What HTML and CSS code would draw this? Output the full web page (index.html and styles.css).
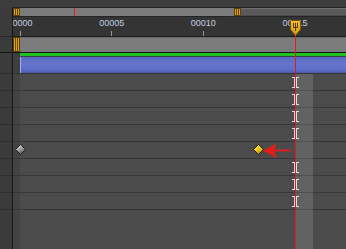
FILE: index.html
```html
<!DOCTYPE html>
<html>
<head>
<meta charset="utf-8">
<link rel="stylesheet" href="styles.css">
</head>
<body>
<div class="app">
  <div class="top"></div>

  <div class="band nav">
    <div class="lc"></div><div class="vl"></div>
    <div class="tl">
      <div class="handle"></div>
      <div class="navbar"><span class="navmark"></span></div>
      <div class="handle"></div>
      <div class="navrest"></div>
    </div>
  </div>

  <div class="band ruler">
    <div class="lc"></div><div class="vl"></div>
    <div class="tl">
      <span class="lbl" style="left:7px">00000</span>
      <span class="lbl" style="left:98.7px">00005</span>
      <span class="lbl" style="left:190.3px">00010</span>
      <span class="lbl" style="left:282px">00015</span>
      <span class="tick" style="left:7px"></span>
      <span class="tick" style="left:98px"></span>
      <span class="tick" style="left:190px"></span>
      <span class="tick" style="left:282px"></span>
    </div>
  </div>

  <div class="band work">
    <div class="lc"></div><div class="vl"></div>
    <div class="tl">
      <div class="handle"></div>
      <div class="workbar"></div>
    </div>
  </div>

  <div class="band greenband">
    <div class="lc"></div><div class="vl"></div>
    <div class="tl">
      <div class="strip"></div>
      <div class="green"></div>
    </div>
  </div>

  <div class="band blueband">
    <div class="lc"></div><div class="vl"></div>
    <div class="tl">
      <div class="strip"></div>
      <div class="blue"></div>
    </div>
  </div>

  <div class="band row"><div class="lc"></div><div class="vl"></div><div class="tl"><div class="strip"></div><svg class="ibeam" width="7" height="11" viewBox="0 0 7 11"><rect x="0" y="0" width="7" height="1"/><rect x="2" y="0" width="3" height="11"/><rect x="0" y="10" width="7" height="1"/></svg></div></div>
  <div class="band row"><div class="lc"></div><div class="vl"></div><div class="tl"><div class="strip"></div><svg class="ibeam" width="7" height="11" viewBox="0 0 7 11"><rect x="0" y="0" width="7" height="1"/><rect x="2" y="0" width="3" height="11"/><rect x="0" y="10" width="7" height="1"/></svg></div></div>
  <div class="band row"><div class="lc"></div><div class="vl"></div><div class="tl"><div class="strip"></div><svg class="ibeam" width="7" height="11" viewBox="0 0 7 11"><rect x="0" y="0" width="7" height="1"/><rect x="2" y="0" width="3" height="11"/><rect x="0" y="10" width="7" height="1"/></svg></div></div>
  <div class="band row"><div class="lc"></div><div class="vl"></div><div class="tl"><div class="strip"></div><svg class="ibeam" width="7" height="11" viewBox="0 0 7 11"><rect x="0" y="0" width="7" height="1"/><rect x="2" y="0" width="3" height="11"/><rect x="0" y="10" width="7" height="1"/></svg></div></div>
  <div class="band row"><div class="lc"></div><div class="vl"></div><div class="tl"><div class="strip"></div>
    <svg class="kf kf-grey" width="11" height="11" viewBox="0 0 11 11">
      <defs><linearGradient id="gg" x1="0" y1="0" x2="0.6" y2="1"><stop offset="0" stop-color="#f2f2f2"/><stop offset="0.5" stop-color="#a8a8a8"/><stop offset="1" stop-color="#555"/></linearGradient></defs>
      <polygon points="5.5,0.5 10.5,5.5 5.5,10.5 0.5,5.5" fill="url(#gg)" stroke="#1e1e1e" stroke-width="1"/>
    </svg>
    <svg class="kf kf-yellow" width="11" height="11" viewBox="0 0 11 11">
      <defs><linearGradient id="yg" x1="0" y1="0" x2="0.6" y2="1"><stop offset="0" stop-color="#fff59a"/><stop offset="0.5" stop-color="#f2d21e"/><stop offset="1" stop-color="#b88a00"/></linearGradient></defs>
      <polygon points="5.5,0.5 10.5,5.5 5.5,10.5 0.5,5.5" fill="url(#yg)" stroke="#2a2000" stroke-width="1"/>
    </svg>
    <svg class="arrow" width="30" height="17" viewBox="0 0 30 17">
      <polygon points="1,8.7 14.5,1.3 12.5,7.6 29,7.4 29,9.2 12.5,9.6 14.5,16" fill="#e41b1b"/>
    </svg>
  </div></div>
  <div class="band row"><div class="lc"></div><div class="vl"></div><div class="tl"><div class="strip"></div><svg class="ibeam" width="7" height="11" viewBox="0 0 7 11"><rect x="0" y="0" width="7" height="1"/><rect x="2" y="0" width="3" height="11"/><rect x="0" y="10" width="7" height="1"/></svg></div></div>
  <div class="band row"><div class="lc"></div><div class="vl"></div><div class="tl"><div class="strip"></div><svg class="ibeam" width="7" height="11" viewBox="0 0 7 11"><rect x="0" y="0" width="7" height="1"/><rect x="2" y="0" width="3" height="11"/><rect x="0" y="10" width="7" height="1"/></svg></div></div>
  <div class="band row"><div class="lc"></div><div class="vl"></div><div class="tl"><div class="strip"></div><svg class="ibeam" width="7" height="11" viewBox="0 0 7 11"><rect x="0" y="0" width="7" height="1"/><rect x="2" y="0" width="3" height="11"/><rect x="0" y="10" width="7" height="1"/></svg></div></div>

  <div class="band rest">
    <div class="lc"></div><div class="vl"></div>
    <div class="tl"><div class="strip"></div></div>
  </div>

  <div class="lightband"></div>
  <div class="cti-line"></div>
  <svg class="cti-head" width="11" height="16" viewBox="0 0 11 16">
    <defs><linearGradient id="cg" x1="0" y1="0" x2="0" y2="1"><stop offset="0" stop-color="#f4bf2a"/><stop offset="1" stop-color="#d69a08"/></linearGradient></defs>
    <path d="M0.5 1.5 Q0.5 0.5 1.5 0.5 H9.5 Q10.5 0.5 10.5 1.5 V9.5 L5.5 15.5 L0.5 9.5 Z" fill="url(#cg)" stroke="#7d5400" stroke-width="1"/>
    <path d="M3.5 3 V7.5 M5.5 3 V11 M7.5 3 V7.5 M3 7.5 H8" stroke="#5a3a00" stroke-width="1" fill="none"/>
  </svg>
</div>
</body>
</html>
```

FILE: styles.css
```css
* { box-sizing: border-box; }
html, body { margin: 0; padding: 0; }
body {
  width: 346px;
  height: 249px;
  overflow: hidden;
  background: #4b4b4b;
  font-family: "Liberation Sans", Arial, sans-serif;
}
.app {
  position: relative;
  width: 346px;
  height: 249px;
  display: flex;
  flex-direction: column;
  overflow: hidden;
}
.top { height: 7px; flex: none; background: #3c3c3c; }
.band { display: flex; flex: none; }
.lc { width: 12px; flex: none; background: #3b3b3b; }
.vl { width: 1px; flex: none; background: #161616; }
.tl { flex: 1; display: flex; position: relative; min-width: 0; }
.strip { width: 7px; flex: none; background: #434343; }

/* navigator */
.nav { height: 10px; }
.nav .tl { border-top: 1px solid #242424; border-bottom: 1px solid #242424; }
.handle {
  width: 7px;
  flex: none;
  border: 1px solid #5e4100;
  background: linear-gradient(to right, #d9a21a 0 1px, #6b4a00 1px 2px, #d9a21a 2px 3px, #6b4a00 3px 4px, #d9a21a 4px);
}
.nav .handle:first-child { border-top-left-radius: 2px; }
.navbar { width: 214px; flex: none; background: #7b7b7b; position: relative; }
.navmark { position: absolute; left: 54px; top: 0; bottom: 0; width: 1px; background: #e02020; }
.navrest { flex: 1; background: #595959; border-top: 1px solid #6e6e6e; border-bottom: 1px solid #4a4a4a; }

/* ruler */
.ruler { height: 20px; }
.ruler .lc { border-bottom: 1px solid #272727; }
.ruler .tl { background: #343434; border-bottom: 1px solid #1e1e1e; overflow: hidden; }
.lbl {
  position: absolute;
  top: 2px;
  transform: translateX(-50%);
  font-size: 9px;
  line-height: 9px;
  color: #c4cfe2;
  white-space: nowrap;
}
.tick { position: absolute; top: 14px; width: 1px; height: 5px; background: #9a9a9a; }

/* work area */
.work { height: 16px; }
.work .lc, .work .tl { border-bottom: 1px solid #141414; }
.workbar { flex: 1; background: #7b7b7b; border-top: 1px solid #6a6a6a; }

/* green */
.greenband { height: 4px; }
.greenband .tl { background: #3e3e3e; }
.green { flex: 1; height: 3px; background: #1fc21f; }
.greenband .strip { background: #3e3e3e; }

/* blue */
.blueband { height: 17px; }
.blueband .lc { border-bottom: 1px solid #2f2f2f; }
.blueband .tl { border-bottom: 1px solid #343434; }
.blueband .strip { background: #3f3f3f; }
.blue {
  flex: 1;
  background: linear-gradient(#5a6ac2, #6575cc 45%, #5b6bc4 85%, #4a58a8);
  border-left: 1px solid #a7afe6;
}

/* rows */
.row { height: 17px; }
.row .lc { border-bottom: 1px solid #2e2e2e; }
.row .tl { background: #4b4b4b; border-bottom: 1px solid #363636; }
.rest { flex: 1; }
.rest .tl { background: #4b4b4b; }

.ibeam { position: absolute; left: 279px; top: 3px; fill: #dcdcdc; z-index: 1; }
.kf { position: absolute; top: 2px; z-index: 4; }
.kf-grey { left: 2px; }
.kf-yellow { left: 240px; }
.arrow { position: absolute; left: 249px; top: 0; z-index: 4; }

/* overlays */
.lightband {
  position: absolute;
  left: 296px;
  top: 74px;
  width: 17px;
  bottom: 0;
  background: rgba(255, 255, 255, 0.13);
  z-index: 2;
}
.cti-line {
  position: absolute;
  left: 295px;
  top: 36px;
  bottom: 0;
  width: 1px;
  background: #e31a1a;
  z-index: 5;
}
.cti-head { position: absolute; left: 290px; top: 20px; z-index: 6; }
```
